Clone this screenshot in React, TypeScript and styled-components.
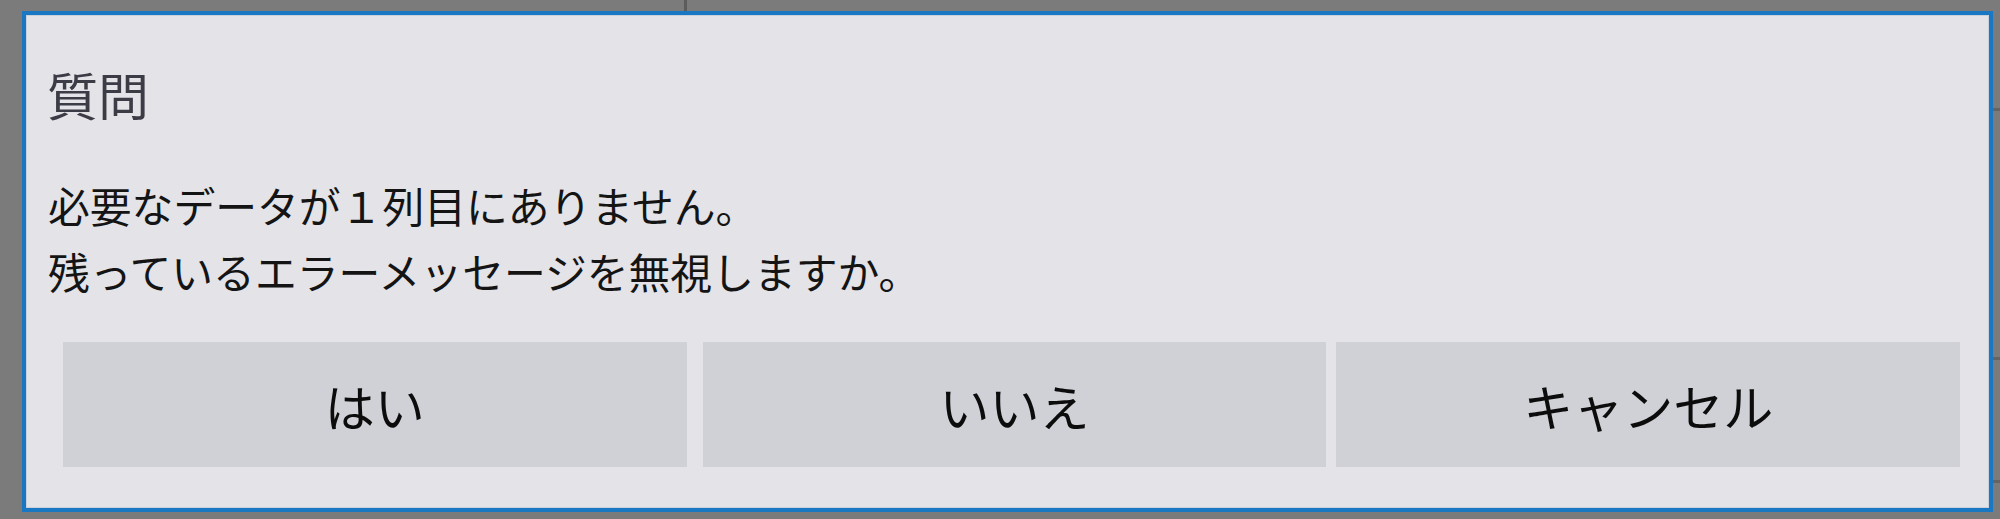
import styled, { createGlobalStyle } from 'styled-components';

const GlobalStyle = createGlobalStyle`
  html, body {
    margin: 0;
    padding: 0;
  }

  body {
    width: 2000px;
    height: 519px;
    overflow: hidden;
    background-color: #7b7b7b;
    background-image:
      linear-gradient(#5c5c5c, #5c5c5c),
      linear-gradient(#646464, #646464),
      linear-gradient(#646464, #646464),
      linear-gradient(#646464, #646464);
    background-repeat: no-repeat;
    background-size: 3px 12px, 8px 3px, 8px 3px, 8px 3px;
    background-position: 684px 0, 1993px 108px, 1993px 357px, 1993px 480px;
    font-family: "Noto Sans CJK JP", "Noto Sans", sans-serif;
  }
`;

const Dialog = styled.div`
  box-sizing: border-box;
  width: 1971px;
  height: 501px;
  margin: 11px 0 0 22px;
  background: #e3e3e8;
  border: 4px solid #1a78c2;
  box-shadow: inset 0 0 0 1px #c7d0dc;
  display: flex;
  flex-direction: column;
  padding: 49px 29px 0 0;
`;

const Title = styled.h1`
  margin: 0;
  padding-left: 21px;
  font-size: 51px;
  font-weight: 400;
  line-height: 60px;
  color: #3c3c46;
`;

const Message = styled.p`
  margin: 48px 0 0;
  padding-left: 22px;
  font-size: 41.8px;
  font-weight: 400;
  line-height: 66px;
  color: #141414;
`;

const ButtonRow = styled.div`
  display: flex;
  margin: 38px 0 0 37px;
  height: 125px;
`;

const Button = styled.button<{ $offset?: number }>`
  flex: 1;
  margin-left: ${(p) => p.$offset ?? 0}px;
  border: none;
  background: #d0d1d6;
  font-family: inherit;
  font-size: 50px;
  color: #0c0c0c;
  display: flex;
  align-items: center;
  justify-content: center;
  padding: 0;
  cursor: pointer;
`;

export default function App() {
  return (
    <>
      <GlobalStyle />
      <Dialog>
        <Title>質問</Title>
        <Message>
          必要なデータが１列目にありません。
          <br />
          残っているエラーメッセージを無視しますか。
        </Message>
        <ButtonRow>
          <Button>はい</Button>
          <Button $offset={16}>いいえ</Button>
          <Button $offset={10}>キャンセル</Button>
        </ButtonRow>
      </Dialog>
    </>
  );
}
